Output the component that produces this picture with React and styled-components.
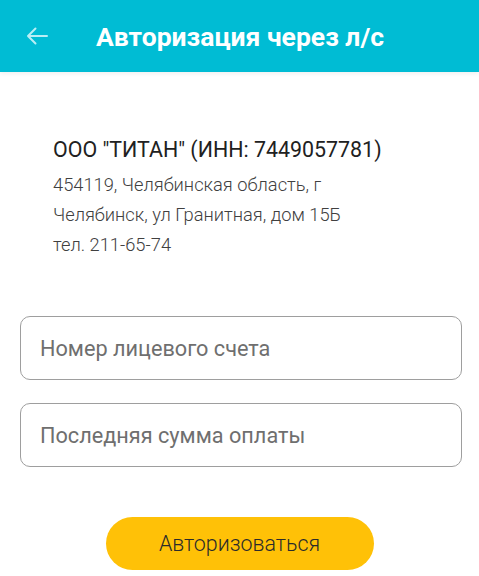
import styled, { createGlobalStyle } from "styled-components";

const GlobalStyle = createGlobalStyle`
  html, body {
    margin: 0;
    padding: 0;
    background: #ffffff;
    font-family: Roboto, "Noto Sans", "Liberation Sans", sans-serif;
  }
  * { box-sizing: border-box; }
`;

const Page = styled.div`
  width: 479px;
  height: 576px;
  overflow: hidden;
  display: flex;
  flex-direction: column;
  background: #ffffff;
`;

const Toolbar = styled.header`
  height: 72px;
  flex-shrink: 0;
  display: flex;
  align-items: center;
  padding-left: 26px;
  background: #00bcd4;
  box-shadow: 0 2px 4px rgba(0, 0, 0, 0.06);
`;

const BackButton = styled.button`
  display: flex;
  align-items: center;
  padding: 0;
  border: none;
  background: none;
  color: #b9eef5;
  cursor: pointer;
`;

const Title = styled.h1`
  margin: 0 0 0 48px;
  font-size: 26.5px;
  font-weight: 700;
  color: #ffffff;
`;

const Content = styled.main`
  display: flex;
  flex-direction: column;
  padding: 64px 20px 0 20px;
`;

// * карточка организации
const Company = styled.section`
  padding-left: 33px;
`;

const CompanyName = styled.div`
  font-size: 21.4px;
  line-height: 28px;
  color: #212121;
`;

const Address = styled.div`
  margin-top: 6px;
  font-size: 18.3px;
  font-weight: 300;
  line-height: 30px;
  color: #404040;
`;

const Form = styled.form`
  display: flex;
  flex-direction: column;
  gap: 23px;
  margin-top: 56px;
`;

const Field = styled.input`
  width: 442px;
  height: 64px;
  padding: 0 19px;
  border: 1.5px solid #9e9e9e;
  border-radius: 10px;
  background: #ffffff;
  font-family: inherit;
  font-size: 21.7px;
  color: #212121;
  outline: none;
  &::placeholder {
    color: #6f6f6f;
  }
`;

const SubmitButton = styled.button`
  align-self: center;
  width: 268px;
  height: 53px;
  margin-top: 27px;
  border: none;
  border-radius: 27px;
  background: #ffc107;
  font-family: inherit;
  font-size: 21.4px;
  font-weight: 300;
  color: #2b2b2b;
  cursor: pointer;
`;

function BackArrow() {
  return (
    <svg width="22" height="18" viewBox="0 0 22 18" fill="none">
      <path
        d="M21 9H2M9.5 1.5L2 9l7.5 7.5"
        stroke="currentColor"
        strokeWidth="2"
        strokeLinecap="round"
        strokeLinejoin="round"
      />
    </svg>
  );
}

export default function App() {
  return (
    <Page>
      <GlobalStyle />
      <Toolbar>
        <BackButton type="button" aria-label="Назад">
          <BackArrow />
        </BackButton>
        <Title>Авторизация через л/с</Title>
      </Toolbar>
      <Content>
        <Company>
          <CompanyName>ООО "ТИТАН" (ИНН: 7449057781)</CompanyName>
          <Address>
            454119, Челябинская область, г
            <br />
            Челябинск, ул Гранитная, дом 15Б
            <br />
            тел. 211-65-74
          </Address>
        </Company>
        <Form onSubmit={(e) => e.preventDefault()}>
          <Field placeholder="Номер лицевого счета" />
          <Field placeholder="Последняя сумма оплаты" />
          <SubmitButton type="submit">Авторизоваться</SubmitButton>
        </Form>
      </Content>
    </Page>
  );
}
